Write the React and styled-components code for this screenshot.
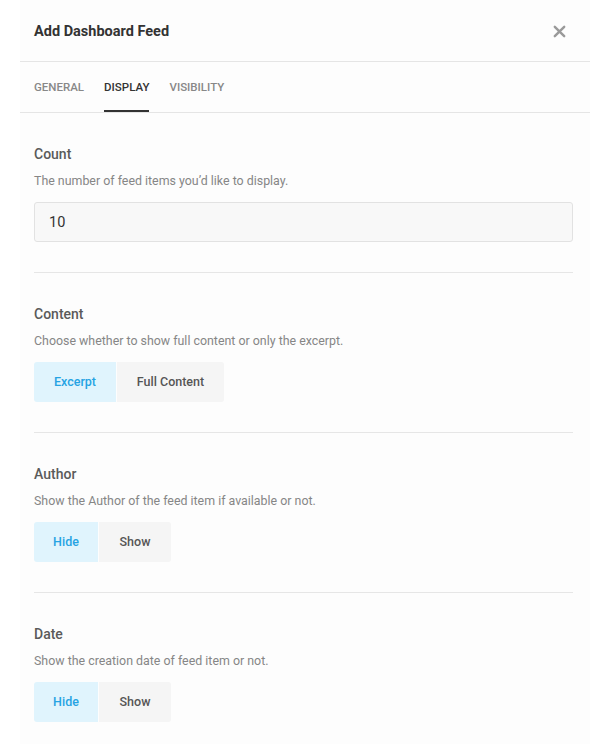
import React, { useState } from 'react'
import styled, { createGlobalStyle } from 'styled-components'

const GlobalStyle = createGlobalStyle`
  body {
    margin: 0;
    background: #ffffff;
    font-family: Roboto, "Liberation Sans", Arial, sans-serif;
    -webkit-font-smoothing: antialiased;
  }
`

const Modal = styled.div`
  width: 570px;
  margin: 0 20px;
  background: #fdfdfd;
  min-height: 744px;
`

const Header = styled.div`
  height: 62px;
  display: flex;
  align-items: center;
  justify-content: space-between;
  padding: 2px 20px 0 14px;
  border-bottom: 1px solid #e5e5e5;
  box-sizing: border-box;
`

const Title = styled.h1`
  margin: 0;
  font-size: 14.5px;
  font-weight: 700;
  color: #333;
`

const Close = styled.button`
  border: 0;
  background: none;
  padding: 0;
  width: 22px;
  height: 22px;
  display: flex;
  align-items: center;
  justify-content: center;
  cursor: pointer;
`

const Tabs = styled.div`
  display: flex;
  gap: 20px;
  padding: 0 14px;
  height: 50px;
  border-bottom: 1px solid #e5e5e5;
`

const Tab = styled.div`
  display: flex;
  align-items: center;
  font-size: 11.5px;
  font-weight: 500;
  text-transform: uppercase;
  color: ${(p) => (p.$active ? '#333' : '#888')};
  box-shadow: ${(p) => (p.$active ? 'inset 0 -2px 0 #333' : 'none')};
  cursor: pointer;
`

const Body = styled.div`
  padding: 0 17px 0 14px;
`

const Section = styled.div`
  padding: 31px 0 30px;
  border-bottom: 1px solid #e6e6e6;
  &:last-child {
    border-bottom: 0;
  }
`

const Label = styled.div`
  font-size: 14px;
  line-height: 20px;
  font-weight: 500;
  color: #5a5a5a;
  margin-bottom: 8px;
`

const Desc = styled.div`
  font-size: 12.4px;
  line-height: 18px;
  color: #868686;
  margin-bottom: 12px;
`

const Input = styled.input`
  display: block;
  width: 100%;
  height: 40px;
  box-sizing: border-box;
  border: 1px solid #e2e2e2;
  border-radius: 3px;
  background: #f8f8f8;
  padding: 0 14px;
  font-family: inherit;
  font-size: 14.5px;
  color: #333;
  outline: none;
`

const Toggle = styled.div`
  display: inline-flex;
  gap: 1px;
  border-radius: 3px;
  overflow: hidden;
`

const Option = styled.button`
  height: 40px;
  border: 0;
  padding: 0 0 1px;
  width: ${(p) => p.$w}px;
  font-family: inherit;
  font-size: 12.5px;
  font-weight: 500;
  background: ${(p) => (p.$active ? '#e0f4fd' : '#f5f5f5')};
  color: ${(p) => (p.$active ? '#26a3e3' : '#555')};
  cursor: pointer;
`

const CloseIcon = () => (
  <svg width="13" height="13" viewBox="0 0 13 13">
    <path d="M1.8 1.8 L11.2 11.2 M11.2 1.8 L1.8 11.2" stroke="#9a9a9a" strokeWidth="2.4" strokeLinecap="round" />
  </svg>
)

const fields = [
  {
    key: 'content',
    label: 'Content',
    desc: 'Choose whether to show full content or only the excerpt.',
    options: [
      { label: 'Excerpt', w: 82 },
      { label: 'Full Content', w: 107 },
    ],
  },
  {
    key: 'author',
    label: 'Author',
    desc: 'Show the Author of the feed item if available or not.',
    options: [
      { label: 'Hide', w: 64 },
      { label: 'Show', w: 72 },
    ],
  },
  {
    key: 'date',
    label: 'Date',
    desc: 'Show the creation date of feed item or not.',
    options: [
      { label: 'Hide', w: 64 },
      { label: 'Show', w: 72 },
    ],
  },
]

const App = () => {
  const [tab, setTab] = useState('Display')
  const [values, setValues] = useState({ content: 0, author: 0, date: 0 })
  const [count, setCount] = useState('10')

  return (
    <>
      <GlobalStyle />
      <Modal>
        <Header>
          <Title>Add Dashboard Feed</Title>
          <Close aria-label="Close">
            <CloseIcon />
          </Close>
        </Header>
        <Tabs>
          {['General', 'Display', 'Visibility'].map((t) => (
            <Tab key={t} $active={tab === t} onClick={() => setTab(t)}>
              {t}
            </Tab>
          ))}
        </Tabs>
        <Body>
          <Section>
            <Label>Count</Label>
            <Desc>The number of feed items you’d like to display.</Desc>
            <Input value={count} onChange={(e) => setCount(e.target.value)} />
          </Section>
          {fields.map((f) => (
            <Section key={f.key}>
              <Label>{f.label}</Label>
              <Desc>{f.desc}</Desc>
              <Toggle>
                {f.options.map((o, i) => (
                  <Option
                    key={o.label}
                    $w={o.w}
                    $active={values[f.key] === i}
                    onClick={() => setValues({ ...values, [f.key]: i })}
                  >
                    {o.label}
                  </Option>
                ))}
              </Toggle>
            </Section>
          ))}
        </Body>
      </Modal>
    </>
  )
}

export default App
